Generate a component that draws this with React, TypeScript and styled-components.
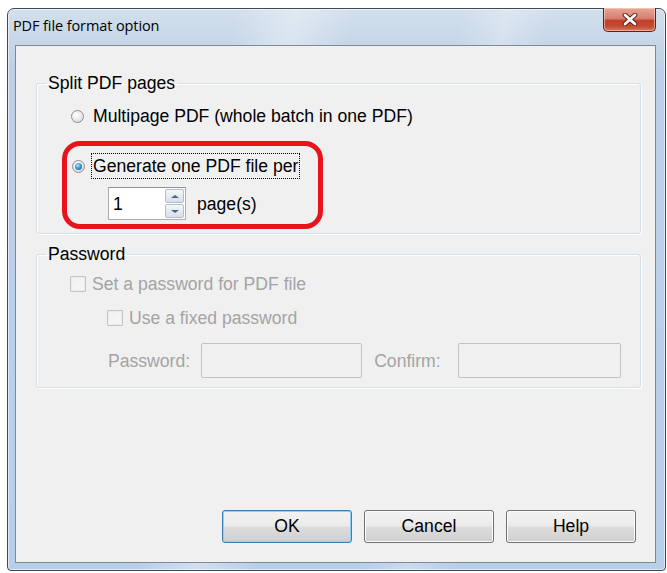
import React from "react";
import styled, { createGlobalStyle } from "styled-components";

const GlobalStyle = createGlobalStyle`
  html, body { margin: 0; padding: 0; background: #ffffff; }
  body { font-family: "Liberation Sans", Arial, sans-serif; }
  * { box-sizing: border-box; }
`;

const Page = styled.div`
  width: 667px;
  height: 573px;
  padding: 8px 0 0 7px;
  overflow: hidden;
`;

const Window = styled.div`
  position: relative;
  width: 659px;
  height: 563px;
  border: 1px solid #3c4a58;
  border-radius: 7px 7px 4px 4px;
  padding: 0 9px 7px 7px;
  display: flex;
  flex-direction: column;
  background:
    linear-gradient(100deg, rgba(255,255,255,0) 30%, rgba(255,255,255,0.35) 38%, rgba(255,255,255,0) 46%, rgba(255,255,255,0) 60%, rgba(255,255,255,0.25) 66%, rgba(255,255,255,0) 72%),
    linear-gradient(180deg, #d2dfec 0px, #c4d5e7 40px, #bcd1e8 60px, #b8cfe8 100%);
  box-shadow: inset 0 0 0 1px rgba(255,255,255,0.55);
`;

const TitleBar = styled.div`
  height: 36px;
  display: flex;
  align-items: center;
  padding: 0 0 4px 5px;
  margin-left: -7px;
`;

const Title = styled.span`
  font-family: "Open Sans", "Noto Sans", sans-serif;
  font-size: 14.5px;
  color: #000;
  letter-spacing: -0.1px;
`;

const CloseButton = styled.div`
  position: absolute;
  top: -1px;
  right: 9px;
  width: 53px;
  height: 24px;
  border: 1px solid #5b2219;
  border-top: none;
  border-radius: 0 0 5px 5px;
  background: linear-gradient(180deg, #e8a594 0%, #d9806f 45%, #c0402c 55%, #c44a33 80%, #dc7a5f 100%);
  box-shadow: inset 0 0 0 1px rgba(255,220,210,0.55);
  display: flex;
  align-items: center;
  justify-content: center;
`;

const Client = styled.div`
  flex: 1;
  display: flex;
  flex-direction: column;
  background: #f0f0f0;
  border: 1px solid #7f8a96;
  padding: 27px 14px 19px 20px;
  font-size: 17.6px;
  color: #000;
`;

const Group = styled.fieldset<{ $gap?: number }>`
  margin: ${(p) => p.$gap ?? 0}px 0 0 0;
  padding: 0;
  min-width: 0;
  border: 1px solid #d5dfe5;
  border-radius: 3px;
  box-shadow: inset 1px 1px 0 #ffffff, 1px 1px 0 #ffffff;
`;

const Legend = styled.legend`
  margin-left: 9px;
  padding: 0 2px;
  line-height: 20px;
  font-size: 17.6px;
  color: #000;
`;

const GroupBody = styled.div<{ $pt: number; $pb: number; $pl: number }>`
  display: flex;
  flex-direction: column;
  align-items: flex-start;
  padding: ${(p) => p.$pt}px 0 ${(p) => p.$pb}px ${(p) => p.$pl}px;
`;

const OptionRow = styled.div<{ $h: number; $indent?: number; $gap?: number; $mt?: number }>`
  display: flex;
  align-items: center;
  height: ${(p) => p.$h}px;
  margin-left: ${(p) => p.$indent ?? 0}px;
  margin-top: ${(p) => p.$mt ?? 0}px;
  gap: ${(p) => p.$gap ?? 0}px;
`;

const Radio = styled.span<{ $checked?: boolean }>`
  position: relative;
  width: 13px;
  height: 13px;
  border-radius: 50%;
  border: 1px solid #8e8f8f;
  background: radial-gradient(circle at 40% 35%, #ffffff 0%, #e8e8e8 55%, #c8c8c8 100%);
  flex: none;
  &::after {
    content: "";
    display: ${(p) => (p.$checked ? "block" : "none")};
    position: absolute;
    left: 2px;
    top: 2px;
    width: 7px;
    height: 7px;
    border-radius: 50%;
    background: radial-gradient(circle at 40% 35%, #b6e6fb 0%, #3a9bd8 45%, #0d4f8f 100%);
  }
`;

const LabelText = styled.span<{ $disabled?: boolean; $ml?: number }>`
  line-height: 20px;
  white-space: nowrap;
  margin-left: ${(p) => p.$ml ?? 0}px;
  color: ${(p) => (p.$disabled ? "#a4a4a4" : "#000")};
`;

const Highlight = styled.div`
  margin: 13px 0 0 -9px;
  width: 261px;
  border: 5px solid #e8141c;
  border-radius: 18px;
  padding: 7px 0 4px 5px;
  display: flex;
  flex-direction: column;
`;

const FocusText = styled.span`
  border: 1px dotted #000;
  padding: 0 1px 0 1px;
  line-height: 24px;
  white-space: nowrap;
`;

const SpinBox = styled.div`
  display: flex;
  width: 78px;
  height: 33px;
  border: 1px solid #abadb3;
  border-top-color: #8f9399;
  background: #fff;
  padding: 1px;
`;

const SpinInput = styled.div`
  flex: 1;
  padding-left: 3px;
  display: flex;
  align-items: center;
  line-height: 20px;
`;

const SpinButtons = styled.div`
  width: 19px;
  display: flex;
  flex-direction: column;
  gap: 1px;
`;

const SpinButton = styled.div<{ $down?: boolean }>`
  flex: 1;
  border: 1px solid #b5bcc7;
  border-radius: 2px;
  background: linear-gradient(180deg, #f4f7fa 0%, #e6ebf1 50%, #d8dfe8 100%);
  display: flex;
  align-items: center;
  justify-content: center;
  &::after {
    content: "";
    width: 0;
    height: 0;
    border-left: 4px solid transparent;
    border-right: 4px solid transparent;
    ${(p) =>
      p.$down
        ? "border-top: 3px solid #4b6186;"
        : "border-bottom: 3px solid #4b6186;"}
  }
`;

const CheckBox = styled.span`
  width: 16px;
  height: 16px;
  border: 1px solid #c4c4c4;
  border-radius: 1px;
  background: linear-gradient(135deg, #f0f0f0 0%, #f6f6f6 100%);
  box-shadow: inset 0 0 0 1px #ececec;
  flex: none;
`;

const TextBox = styled.div<{ $w: number; $ml: number }>`
  width: ${(p) => p.$w}px;
  height: 35px;
  margin-left: ${(p) => p.$ml}px;
  border: 1px solid #c3c3c3;
  border-radius: 2px;
  background: #f0f0f0;
  flex: none;
`;

const Spacer = styled.div`
  flex: 1;
`;

const ButtonRow = styled.div`
  display: flex;
  justify-content: flex-end;
  gap: 12px;
  padding-right: 5px;
`;

const Button = styled.button<{ $default?: boolean }>`
  width: 130px;
  height: 33px;
  font-family: "Liberation Sans", Arial, sans-serif;
  font-size: 17.6px;
  color: #000;
  border: 1px solid ${(p) => (p.$default ? "#3c7fb1" : "#707070")};
  border-radius: 3px;
  background: linear-gradient(180deg, #f2f2f2 0%, #ebebeb 49%, #dddddd 51%, #cfcfcf 100%);
  box-shadow: inset 0 0 0 1px ${(p) => (p.$default ? "#8fd0f1" : "#fcfcfc")};
  padding: 0;
`;

function CloseGlyph() {
  return (
    <svg width="16" height="13" viewBox="0 0 16 13">
      <path d="M3 2 L13 11 M13 2 L3 11" stroke="#5a1d14" strokeWidth="4.6" strokeLinecap="round" />
      <path d="M3 2 L13 11 M13 2 L3 11" stroke="#ffffff" strokeWidth="2.8" strokeLinecap="round" />
    </svg>
  );
}

export default function App() {
  return (
    <>
      <GlobalStyle />
      <Page>
        <Window>
          <TitleBar>
            <Title>PDF file format option</Title>
          </TitleBar>
          <CloseButton>
            <CloseGlyph />
          </CloseButton>
          <Client>
            <Group>
              <Legend>Split PDF pages</Legend>
              <GroupBody $pt={11} $pb={4} $pl={34}>
                <OptionRow $h={24} $gap={9}>
                  <Radio />
                  <LabelText>Multipage PDF (whole batch in one PDF)</LabelText>
                </OptionRow>
                <Highlight>
                  <OptionRow $h={26} $gap={6}>
                    <Radio $checked />
                    <FocusText>Generate one PDF file per</FocusText>
                  </OptionRow>
                  <OptionRow $h={33} $indent={36} $mt={8} $gap={11}>
                    <SpinBox>
                      <SpinInput>1</SpinInput>
                      <SpinButtons>
                        <SpinButton />
                        <SpinButton $down />
                      </SpinButtons>
                    </SpinBox>
                    <LabelText>page(s)</LabelText>
                  </OptionRow>
                </Highlight>
              </GroupBody>
            </Group>
            <Group $gap={10}>
              <Legend>Password</Legend>
              <GroupBody $pt={9} $pb={9} $pl={33}>
                <OptionRow $h={22} $gap={6}>
                  <CheckBox />
                  <LabelText $disabled>Set a password for PDF file</LabelText>
                </OptionRow>
                <OptionRow $h={22} $indent={37} $mt={12} $gap={6}>
                  <CheckBox />
                  <LabelText $disabled>Use a fixed password</LabelText>
                </OptionRow>
                <OptionRow $h={35} $indent={38} $mt={14}>
                  <LabelText $disabled>Password:</LabelText>
                  <TextBox $w={161} $ml={11} />
                  <LabelText $disabled $ml={12}>Confirm:</LabelText>
                  <TextBox $w={163} $ml={17} />
                </OptionRow>
              </GroupBody>
            </Group>
            <Spacer />
            <ButtonRow>
              <Button $default>OK</Button>
              <Button>Cancel</Button>
              <Button>Help</Button>
            </ButtonRow>
          </Client>
        </Window>
      </Page>
    </>
  );
}
